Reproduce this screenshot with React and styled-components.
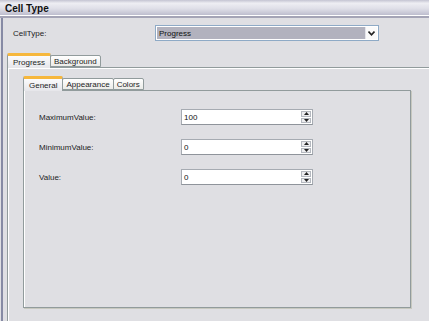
import React from 'react';
import styled, { createGlobalStyle } from 'styled-components';

const GlobalStyle = createGlobalStyle`
  html, body {
    margin: 0;
    padding: 0;
    background: #dfdfe3;
  }
`;

const Frame = styled.div`
  width: 429px;
  height: 321px;
  overflow: hidden;
  background: #dfdfe3;
  font-family: 'Liberation Sans', Arial, sans-serif;
  font-size: 8px;
  color: #1c1c1c;
  display: flex;
  flex-direction: column;
`;

const Header = styled.div`
  height: 16px;
  flex: none;
  padding-left: 5px;
  display: flex;
  align-items: center;
  font-size: 10px;
  font-weight: bold;
  color: #111;
  background: linear-gradient(#c4c4d2 0, #eeeef3 20%, #dedee7 55%, #b8b8ca 100%);
  border-bottom: 2px solid #a4a4b6;
  box-shadow: inset 0 -1px 0 #fff;
`;

const Body = styled.div`
  flex: 1;
  display: flex;
  flex-direction: column;
  padding-top: 7px;
  margin-left: 1px;
  border-left: 2px solid #868aa4;
  min-height: 0;
`;

const TypeRow = styled.div`
  display: grid;
  grid-template-columns: 142px 224px;
  align-items: center;
  padding-left: 10px;
  height: 16px;
`;

const Label = styled.span`
  white-space: nowrap;
`;

const Combo = styled.div`
  height: 16px;
  box-sizing: border-box;
  border: 1px solid #8eaac6;
  background: #fff;
  padding: 1px;
  display: flex;
`;

const ComboText = styled.div`
  flex: 1;
  background: #b2b2be;
  display: flex;
  align-items: center;
  padding-left: 2px;
  color: #111;
`;

const ComboButton = styled.div`
  width: 11px;
  border-left: 1px solid #e4e4ea;
  background: #fafafa;
  display: flex;
  align-items: center;
  justify-content: center;
`;

const Tabs = styled.div`
  display: flex;
  flex-direction: column;
  margin: ${p => p.$top}px 0 0 ${p => p.$left}px;
  flex: ${p => (p.$grow ? 1 : 'none')};
  min-height: 0;
`;

const TabStrip = styled.div`
  display: flex;
  align-items: flex-end;
  height: 14px;
  flex: none;
`;

const Tab = styled.div`
  box-sizing: border-box;
  position: relative;
  padding: 0 ${p => (p.$active ? 5 : 3)}px;
  display: flex;
  align-items: center;
  white-space: nowrap;
  border: 1px solid #919b9c;
  border-bottom: ${p => (p.$active ? 'none' : '1px solid #919b9c')};
  border-top: ${p => (p.$active ? '3px solid #f6b73c' : '1px solid #919b9c')};
  border-radius: 2px 2px 0 0;
  height: ${p => (p.$active ? 15 : 12)}px;
  margin-bottom: ${p => (p.$active ? -1 : 0)}px;
  margin-left: ${p => (p.$active ? 0 : -1)}px;
  background: ${p => (p.$active
    ? 'linear-gradient(#fbfbfc, #e6e6ea)'
    : 'linear-gradient(#ffffff, #ebebe8)')};
  z-index: ${p => (p.$active ? 1 : 0)};
  padding-top: ${p => (p.$active ? 0 : 1)}px;
`;

const OuterPanel = styled.div`
  flex: 1;
  border-top: 1px solid #919b9c;
  border-left: 1px solid #919b9c;
  box-shadow: inset 1px 1px 0 #fff;
  display: flex;
  flex-direction: column;
  padding: 8px 0 0 15px;
`;

const InnerPanel = styled.div`
  width: 388px;
  height: 218px;
  box-sizing: border-box;
  border: 1px solid #919b9c;
  box-shadow: inset 1px 0 0 #fff, 1px 1px 0 #c7c8bf;
  padding: 18px 0 0 15px;
  display: flex;
  flex-direction: column;
  gap: 14px;
`;

const FieldRow = styled.div`
  display: grid;
  grid-template-columns: 142px 132px;
  align-items: center;
  height: 16px;
`;

const SpinBox = styled.div`
  height: 16px;
  box-sizing: border-box;
  border: 1px solid #a6abb2;
  border-bottom-color: #8f949b;
  background: #fff;
  display: flex;
  align-items: center;
  padding: 0 1px 0 2px;
`;

const SpinValue = styled.span`
  flex: 1;
  color: #111;
`;

const Spinner = styled.div`
  width: 10px;
  height: 12px;
  display: flex;
  flex-direction: column;
  gap: 1px;
`;

const SpinButton = styled.div`
  flex: 1;
  border: 1px solid #b4b8bf;
  background: #ececef;
  display: flex;
  align-items: center;
  justify-content: center;
`;

const Arrow = ({ up }) => (
  <svg width="5" height="3" viewBox="0 0 5 3">
    <path d={up ? 'M0 3 L2.5 0 L5 3 Z' : 'M0 0 L2.5 3 L5 0 Z'} fill="#222" />
  </svg>
);

const Chevron = () => (
  <svg width="7" height="5" viewBox="0 0 7 5">
    <path d="M0.5 0.5 L3.5 3.8 L6.5 0.5" stroke="#222" strokeWidth="1.6" fill="none" />
  </svg>
);

const fields = [
  { label: 'MaximumValue:', value: '100' },
  { label: 'MinimumValue:', value: '0' },
  { label: 'Value:', value: '0' },
];

const App = () => {
  return (
    <Frame>
      <GlobalStyle />
      <Header>Cell Type</Header>
      <Body>
        <TypeRow>
          <Label>CellType:</Label>
          <Combo>
            <ComboText>Progress</ComboText>
            <ComboButton><Chevron /></ComboButton>
          </Combo>
        </TypeRow>
        <Tabs $top={12} $left={4} $grow>
          <TabStrip>
            <Tab $active>Progress</Tab>
            <Tab>Background</Tab>
          </TabStrip>
          <OuterPanel>
            <Tabs $top={0} $left={0}>
              <TabStrip>
                <Tab $active>General</Tab>
                <Tab>Appearance</Tab>
                <Tab>Colors</Tab>
              </TabStrip>
              <InnerPanel>
                {fields.map(f => (
                  <FieldRow key={f.label}>
                    <Label>{f.label}</Label>
                    <SpinBox>
                      <SpinValue>{f.value}</SpinValue>
                      <Spinner>
                        <SpinButton><Arrow up /></SpinButton>
                        <SpinButton><Arrow /></SpinButton>
                      </Spinner>
                    </SpinBox>
                  </FieldRow>
                ))}
              </InnerPanel>
            </Tabs>
          </OuterPanel>
        </Tabs>
      </Body>
    </Frame>
  );
};

export default App;
